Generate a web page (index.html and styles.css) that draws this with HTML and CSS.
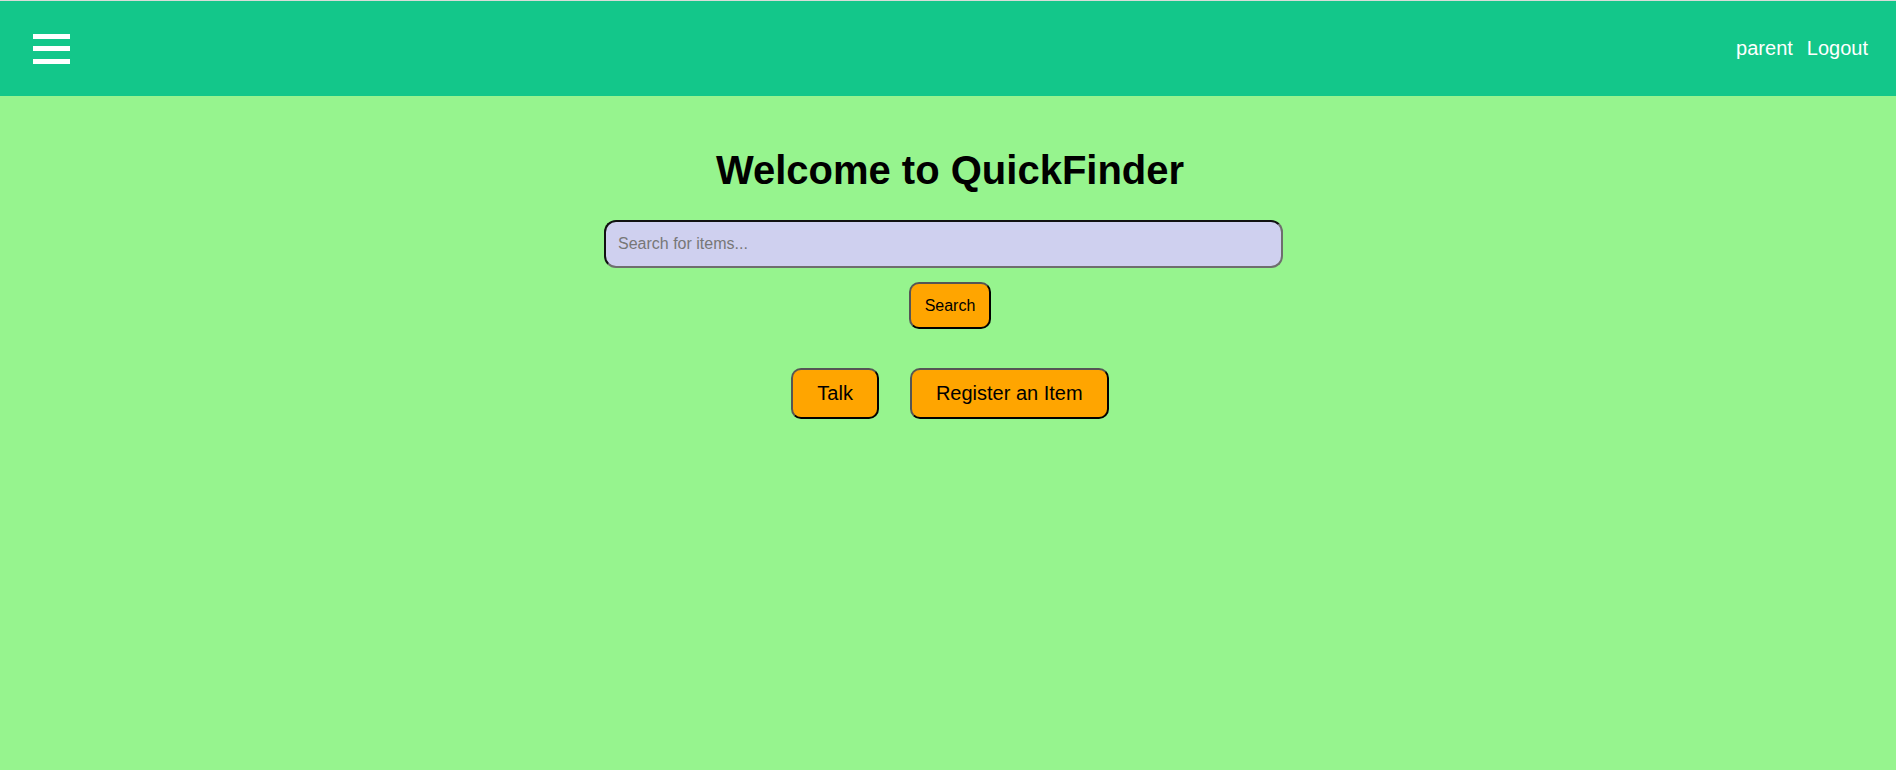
FILE: index.html
```html
<!DOCTYPE html>
<html lang="en">
<head>
<meta charset="utf-8">
<title>QuickFinder</title>
<link rel="stylesheet" href="styles.css">
</head>
<body>
<header class="topbar">
  <button class="menu-btn" aria-label="Menu">
    <span class="bar"></span>
    <span class="bar"></span>
    <span class="bar"></span>
  </button>
  <nav class="user-nav">
    <span class="user-name">parent</span>
    <a class="logout" href="#">Logout</a>
  </nav>
</header>
<main class="content">
  <h1 class="title">Welcome to QuickFinder</h1>
  <input class="search-input" type="text" placeholder="Search for items...">
  <button class="btn btn-small">Search</button>
  <div class="actions">
    <button class="btn btn-large">Talk</button>
    <button class="btn btn-large">Register an Item</button>
  </div>
</main>
</body>
</html>
```

FILE: styles.css
```css
* { box-sizing: border-box; }
html, body {
  margin: 0;
  padding: 0;
  height: 100%;
}
body {
  background: #96f48e;
  font-family: "Liberation Sans", Arial, sans-serif;
  color: #000;
}
.topbar {
  height: 96px;
  background: #13c78a;
  border-top: 1px solid #d8dcd9;
  display: flex;
  align-items: center;
  justify-content: space-between;
  padding: 0 28px 0 33px;
}
.menu-btn {
  background: none;
  border: 0;
  padding: 0;
  width: 37px;
  display: flex;
  flex-direction: column;
  gap: 7.5px;
  cursor: pointer;
}
.bar {
  display: block;
  width: 37px;
  height: 5px;
  background: #fff;
}
.user-nav {
  display: flex;
  gap: 14px;
  font-size: 20px;
  color: #fff;
}
.logout {
  color: #fff;
  text-decoration: none;
}
.content {
  display: flex;
  flex-direction: column;
  align-items: center;
  padding: 51px 0 0 4px;
}
.title {
  margin: 0;
  font-size: 40px;
  font-weight: bold;
  line-height: 46px;
}
.search-input {
  margin: 27px 13px 0 0;
  width: 679px;
  height: 48px;
  padding: 0 12px;
  font-family: "Liberation Sans", Arial, sans-serif;
  font-size: 16px;
  background: #cfd0ef;
  border: 2px solid;
  border-color: #111 #6e6e6e #6e6e6e #111;
  border-radius: 12px;
  outline: none;
}
.search-input::placeholder {
  color: #777;
}
.btn {
  font-family: "Liberation Sans", Arial, sans-serif;
  background: #ffa500;
  color: #000;
  border: 2px solid;
  border-color: #555 #000 #000 #555;
  border-radius: 10px;
  cursor: pointer;
  line-height: normal;
}
.btn-small {
  margin-top: 14px;
  font-size: 16px;
  height: 47px;
  padding: 0 13.5px;
}
.actions {
  margin-top: 39px;
  display: flex;
  gap: 31px;
}
.btn-large {
  font-size: 20px;
  height: 51px;
  padding: 0 24px;
}
```
